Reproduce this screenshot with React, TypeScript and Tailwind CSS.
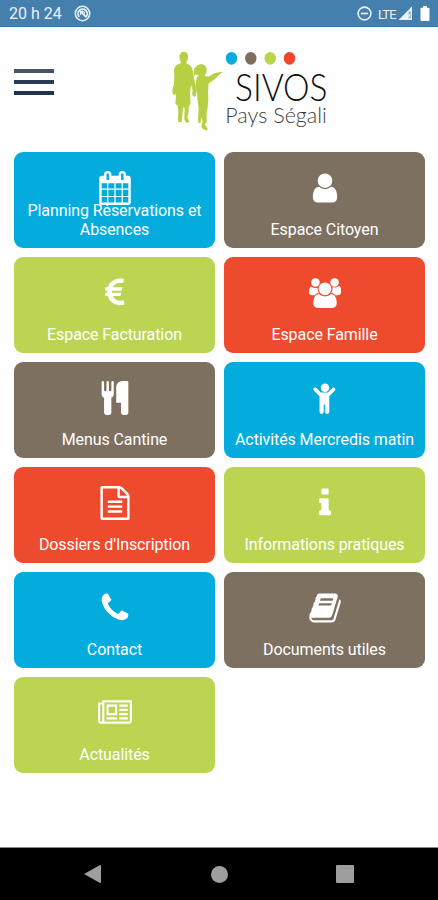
import React from "react";

type IconName =
  | "calendar" | "user" | "euro" | "users" | "cutlery" | "child"
  | "file" | "info" | "phone" | "book" | "news";

const ICONS: Record<IconName, { width: number; d: string }> = {
  calendar: { width: 1792, d: "M192 1664h288v-288h-288v288zm352 0h320v-288h-320v288zm-352-352h288v-320h-288v320zm352 0h320v-320h-320v320zm-352-384h288v-288h-288v288zm736 736h320v-288h-320v288zm-384-736h320v-288h-320v288zm768 736h288v-288h-288v288zm-384-352h320v-320h-320v320zm-352-864v-288q0-13-9.5-22.5t-22.5-9.5h-64q-13 0-22.5 9.5t-9.5 22.5v288q0 13 9.5 22.5t22.5 9.5h64q13 0 22.5-9.5t9.5-22.5zm736 864h288v-320h-288v320zm-384-384h320v-288h-320v288zm384 0h288v-288h-288v288zm32-480v-288q0-13-9.5-22.5t-22.5-9.5h-64q-13 0-22.5 9.5t-9.5 22.5v288q0 13 9.5 22.5t22.5 9.5h64q13 0 22.5-9.5t9.5-22.5zm384-64v1280q0 52-38 90t-90 38h-1408q-52 0-90-38t-38-90v-1280q0-52 38-90t90-38h128v-96q0-66 47-113t113-47h64q66 0 113 47t47 113v96h384v-96q0-66 47-113t113-47h64q66 0 113 47t47 113v96h128q52 0 90 38t38 90z" },
  user: { width: 1792, d: "M1536 1399q0 109-62.5 187t-150.5 78h-854q-88 0-150.5-78t-62.5-187q0-85 8.5-160.5t31.5-152 58.5-131 94-89 134.5-34.5q131 128 313 128t313-128q76 0 134.5 34.5t94 89 58.5 131 31.5 152 8.5 160.5zm-256-887q0 159-112.5 271.5t-271.5 112.5-271.5-112.5-112.5-271.5 112.5-271.5 271.5-112.5 271.5 112.5 112.5 271.5z" },
  euro: { width: 1792, d: "M1360 1307l35 159q3 12-3 22.5t-17 14.5l-5 1q-4 2-10.5 3.5t-16 4.5-21.5 5.5-25.5 5-30 5-33.5 4.5-36.5 3-38.5 1q-234 0-409-130.5t-238-351.5h-95q-13 0-22.5-9.5t-9.5-22.5v-113q0-13 9.5-22.5t22.5-9.5h66q-2-57 1-105h-67q-14 0-23-9t-9-23v-114q0-14 9-23t23-9h98q67-210 243.5-338t400.5-128q102 0 194 23 11 3 20 15 6 11 3 24l-43 159q-3 13-14 19.5t-24 2.5l-4-1q-4-1-11.5-2.5l-17.5-3.5-22.5-3.5-26-3-29-2.5-29.5-1q-126 0-226 64t-150 176h468q16 0 25 12 10 12 7 26l-24 114q-5 26-32 26h-488q-3 37 0 105h459q15 0 25 12 9 12 6 27l-24 112q-2 11-11 18.5t-20 7.5h-387q48 117 149.5 185.5t228.5 68.5q18 0 36-1.5t33.5-3.5 29.5-4.5 24.5-5 18.5-4.5l12-3 5-2q13-5 26 2 12 7 15 21z" },
  users: { width: 2048, d: "M657 896q-162 5-265 128h-134q-82 0-138-40.5t-56-118.5q0-353 124-353 6 0 43.5 21t97.5 42.5 119 21.5q67 0 133-23-5 37-5 66 0 159 90 288zm1071 637q0 120-73 189.5t-194 69.5h-874q-121 0-194-69.5t-73-189.5q0-53 3.5-103.5t14-109 26.5-108.5 43-97.5 62-81 85.5-53.5 111.5-20q10 0 43 21.5t73 48 107 48 135 21.5 135-21.5 107-48 73-48 43-21.5q61 0 111.5 20t85.5 53.5 62 81 43 97.5 26.5 108.5 14 109 3.5 103.5zm-1024-1277q0 106-75 181t-181 75-181-75-75-181 75-181 181-75 181 75 75 181zm704 384q0 159-112.5 271.5t-271.5 112.5-271.5-112.5-112.5-271.5 112.5-271.5 271.5-112.5 271.5 112.5 112.5 271.5zm576 225q0 78-56 118.5t-138 40.5h-134q-103-123-265-128 90-129 90-288 0-29-5-66 66 23 133 23 59 0 119-21.5t97.5-42.5 43.5-21q124 0 124 353zm-128-609q0 106-75 181t-181 75-181-75-75-181 75-181 181-75 181 75 75 181z" },
  cutlery: { width: 1792, d: "M832 64v640q0 61-35.5 111t-92.5 70v779q0 52-38 90t-90 38h-128q-52 0-90-38t-38-90v-779q-57-20-92.5-70t-35.5-111v-640q0-26 19-45t45-19 45 19 19 45v416q0 26 19 45t45 19 45-19 19-45v-416q0-26 19-45t45-19 45 19 19 45v416q0 26 19 45t45 19 45-19 19-45v-416q0-26 19-45t45-19 45 19 19 45zm768 0v1600q0 52-38 90t-90 38h-128q-52 0-90-38t-38-90v-512h-224q-13 0-22.5-9.5t-9.5-22.5v-800q0-132 94-226t226-94h256q26 0 45 19t19 45z" },
  child: { width: 1792, d: "M1412 508l-292 292v824q0 46-33 79t-79 33-79-33-33-79v-384h-64v384q0 46-33 79t-79 33-79-33-33-79v-824l-292-292q-28-28-28-68t28-68q29-28 68.5-28t67.5 28l228 228h368l228-228q28-28 68-28t68 28q28 29 28 68.5t-28 67.5zM1120 352a224 224 0 1 1-448 0a224 224 0 1 1 448 0z" },
  file: { width: 1792, d: "M1596 380q28 28 48 76t20 88v1152q0 40-28 68t-68 28h-1344q-40 0-68-28t-28-68v-1600q0-40 28-68t68-28h896q40 0 88 20t76 48zm-444-244v376h376q-10-29-22-41l-313-313q-12-12-41-22zm384 1528v-1024h-416q-40 0-68-28t-28-68v-416h-768v1536h1280zm-1024-864q0-14 9-23t23-9h704q14 0 23 9t9 23v64q0 14-9 23t-23 9h-704q-14 0-23-9t-9-23v-64zm736 224q14 0 23 9t9 23v64q0 14-9 23t-23 9h-704q-14 0-23-9t-9-23v-64q0-14 9-23t23-9h704zm0 256q14 0 23 9t9 23v64q0 14-9 23t-23 9h-704q-14 0-23-9t-9-23v-64q0-14 9-23t23-9h704z" },
  info: { width: 1792, d: "M1216 1344v128q0 26-19 45t-45 19h-512q-26 0-45-19t-19-45v-128q0-26 19-45t45-19h64v-384h-64q-26 0-45-19t-19-45v-128q0-26 19-45t45-19h384q26 0 45 19t19 45v576h64q26 0 45 19t19 45zm-128-1152v192q0 26-19 45t-45 19h-256q-26 0-45-19t-19-45v-192q0-26 19-45t45-19h256q26 0 45 19t19 45z" },
  phone: { width: 1792, d: "M1600 1240q0 27-10 70.5t-21 68.5q-21 50-122 106-94 51-186 51-27 0-52.5-3.5t-57.5-12.5-47.5-14.5-55.5-20.5-49-18q-98-35-175-83-128-79-264.5-215.5t-215.5-264.5q-48-77-83-175-3-9-18-49t-20.5-55.5-14.5-47.5-12.5-57.5-3.5-52.5q0-92 51-186 56-101 106-122 25-11 68.5-21t70.5-10q14 0 21 3 18 6 53 76 11 19 30 54t35 63.5 31 53.5q3 4 17.5 25t21.5 35.5 7 28.5q0 20-28.5 50t-62 55-62 53-28.5 46q0 9 5 22.5t8.5 20.5 14 24 11.5 19q76 137 174 235t235 174q2 1 19 11.5t24 14 20.5 8.5 22.5 5q18 0 46-28.5t53-62 55-62 50-28.5q14 0 28.5 7t35.5 21.5 25 17.5q25 15 53.5 31t63.5 35 54 30q70 35 76 53 3 7 3 21z" },
  book: { width: 1792, d: "M1703 478q40 57 18 129l-275 906q-19 64-76.5 107.5t-122.5 43.5h-923q-77 0-148.5-53.5t-99.5-131.5q-24-67-2-127 0-4 3-27t4-37q1-8-3-21.5t-3-19.5q2-11 8-21t16.5-23.5 16.5-23.5q23-38 45-91.5t30-91.5q3-10 .5-30t-.5-28q3-11 17-28t17-23q21-36 42-92t25-90q1-9-2.5-32t.5-28q4-13 22-30.5t22-22.5q19-26 42.5-84.5t27.5-96.5q1-8-3-25.5t-2-26.5q2-8 9-18t18-23 17-21q8-12 16.5-30.5t15-35 16-36 19.5-32 26.5-23.5 36-11.5 47.5 5.5l-1 3q38-9 51-9h761q74 0 114 56t18 130l-274 906q-36 119-71.5 153.5t-128.5 34.5h-869q-27 0-38 15-11 16-1 43 24 70 144 70h923q29 0 56-15.5t35-41.5l300-987q7-22 5-57 38 15 59 43zm-1064 2q-4 13 2 22.5t20 9.5h608q13 0 25.5-9.5t16.5-22.5l21-64q4-13-2-22.5t-20-9.5h-608q-13 0-25.5 9.5t-16.5 22.5zm-83 256q-4 13 2 22.5t20 9.5h608q13 0 25.5-9.5t16.5-22.5l21-64q4-13-2-22.5t-20-9.5h-608q-13 0-25.5 9.5t-16.5 22.5z" },
  news: { width: 2048, d: "M1024 512h-384v384h384v-384zm128 640v128h-640v-128h640zm0-768v640h-640v-640h640zm640 768v128h-512v-128h512zm0-256v128h-512v-128h512zm0-256v128h-512v-128h512zm0-256v128h-512v-128h512zm-1536 960v-960h-128v960q0 26 19 45t45 19 45-19 19-45zm1664 0v-1088h-1536v1088q0 33-11 64h1483q26 0 45-19t19-45zm128-1216v1216q0 80-56 136t-136 56h-1664q-80 0-136-56t-56-136v-1088h256v-128h1792z" },
};

const BLUE = "bg-[#03acdd]";
const BROWN = "bg-[#7e7060]";
const GREEN = "bg-[#bbd553]";
const RED = "bg-[#ee4b2e]";

const TILES: { icon: IconName; label: string; color: string }[] = [
  { icon: "calendar", label: "Planning Réservations et Absences", color: BLUE },
  { icon: "user", label: "Espace Citoyen", color: BROWN },
  { icon: "euro", label: "Espace Facturation", color: GREEN },
  { icon: "users", label: "Espace Famille", color: RED },
  { icon: "cutlery", label: "Menus Cantine", color: BROWN },
  { icon: "child", label: "Activités Mercredis matin", color: BLUE },
  { icon: "file", label: "Dossiers d'Inscription", color: RED },
  { icon: "info", label: "Informations pratiques", color: GREEN },
  { icon: "phone", label: "Contact", color: BLUE },
  { icon: "book", label: "Documents utiles", color: BROWN },
  { icon: "news", label: "Actualités", color: GREEN },
];

function StatusBar() {
  return (
    <div className="flex h-[27px] items-center border-b border-[#3173a8] bg-[#457fae] pl-[9px] pr-[8px] text-white">
      <span className="pt-[2px] text-[16px] leading-none text-[#eaf3fa]">20 h 24</span>
      <svg className="ml-[12px] mt-[1px] size-[17px]" viewBox="0 0 17 17" fill="none" stroke="#eaf3fa">
        <circle cx="8.5" cy="8.5" r="7.2" strokeWidth="1.5" />
        <path d="M12.4 11.2A4.6 4.6 0 1 0 5.3 11.8M5.2 5.2l7.2 7.2" strokeWidth="1.7" />
        <path d="M7.2 9.8A2 2 0 1 1 10.3 9" strokeWidth="1.3" />
      </svg>
      <svg className="ml-auto size-[15px]" viewBox="0 0 15 15" fill="none" stroke="#eaf3fa" strokeWidth="1.6">
        <circle cx="7.5" cy="7.5" r="6.4" />
        <path d="M4 7.5h7" />
      </svg>
      <span className="ml-[6px] mt-[2px] w-[19px] text-[13px] leading-none tracking-[-0.9px] text-[#eaf3fa]">LTE</span>
      <svg className="ml-[1px] mt-[1px] h-[15px] w-[15px]" viewBox="0 0 15 15">
        <path d="M14 .5V14H.5z" fill="#eaf3fa" />
        <path d="M10.7 5.5H14V14h-3.3z" fill="#457fae" opacity=".65" />
        <path d="M13.3 1v12.4H10" fill="none" stroke="#eaf3fa" strokeWidth="1.2" />
        <path d="M11.5 8v3M11.5 12v1" stroke="#eaf3fa" strokeWidth="1.2" />
      </svg>
      <svg className="ml-[7px] mt-[1px] h-[15px] w-[10px]" viewBox="0 0 10 15" fill="#fff">
        <path d="M3 0h4v1.8h1.6q.9 0 .9.9v11.4q0 .9-.9.9H1.4q-.9 0-.9-.9V2.7q0-.9.9-.9H3z" />
      </svg>
    </div>
  );
}

function Logo() {
  return (
    <svg className="h-[90px] w-[180px]" viewBox="0 0 180 90" aria-label="SIVOS Pays Ségali">
      {/* two children walking hand in hand */}
      <g transform="scale(.33333) translate(-15 -15)" fill="#b7d043">
        <path d="M71 35C80 35 85 42 84 51C84 58 81 63 79 66L80 71C91 75 96 79 98 91L102 115L107 138L109 158L105 171L98 166L98 151L93 135L90 160L92 190L86 200L86 217L82 232L88 245L79 249L73 239L74 204L70 202L67 224L65 241L66 246L56 247L54 239L55 216L53 197L46 192L48 169L46 159L45 166L38 163L37 149L42 134L43 107L42 88C44 79 50 74 62 70L63 65C58 59 58 52 59 46C61 39 65 35 71 35Z" />
        <path d="M122 73C132 71 140 79 140 89C140 98 137 104 133 107L145 110L163 100L180 96L188 97L178 104L164 118L146 130L144 157L145 176L143 202L140 219L140 248L134 252L143 267L140 272L128 266L124 260L128 244L124 232L121 250L115 249L114 236L116 205L112 177L111 150L105 171L97 165L98 151L105 153L108 128C108 116 111 110 116 108L113 105L106 103L103 109C100 101 101 83 108 80C111 76 116 73 122 73Z" />
      </g>
      <ellipse cx="66.5" cy="13.3" rx="5.7" ry="6.4" fill="#09abdc" />
      <ellipse cx="85.8" cy="13.3" rx="5.7" ry="6.4" fill="#7c6d5d" />
      <ellipse cx="105.2" cy="13.3" rx="5.7" ry="6.4" fill="#b9d64a" />
      <ellipse cx="124.5" cy="13.3" rx="5.7" ry="6.4" fill="#ee452b" />
      <text x="70" y="56.3" textLength="92.5" lengthAdjust="spacingAndGlyphs" className="font-['Lato',sans-serif] text-[36.5px] font-light" fill="#111">SIVOS</text>
      <text x="60.3" y="77.7" textLength="101.5" lengthAdjust="spacingAndGlyphs" className="font-['Lato',sans-serif] text-[21px] font-light" fill="#3d3d3d">Pays Ségali</text>
    </svg>
  );
}

function Tile({ icon, label, color }: { icon: IconName; label: string; color: string }) {
  const { width, d } = ICONS[icon];
  return (
    <button className={`flex min-h-0 flex-col items-center rounded-[9px] px-[6px] pb-[8px] pt-[19px] ${color}`}>
      <span className="flex h-[34px] min-h-0 shrink justify-center">
        <svg className="size-[34px] shrink-0" viewBox={`0 0 ${width} 1792`} fill="#fff">
          <path d={d} />
        </svg>
      </span>
      <span className="mt-auto max-w-[181px] shrink-0 text-center text-[16px] leading-[18.7px] tracking-[-0.09px] text-white">{label}</span>
    </button>
  );
}

export default function App() {
  return (
    <div className="flex h-[900px] w-[438px] flex-col overflow-hidden bg-[#fefefe] font-['Roboto',sans-serif]">
      <StatusBar />
      <header className="flex h-[125px] shrink-0 items-start pl-[14px]">
        <button className="mt-[42px] flex w-[40px] flex-col gap-[7px]" aria-label="Menu">
          <span className="h-[4px] w-full bg-[#475569]" />
          <span className="h-[4px] w-full bg-[#283c57]" />
          <span className="h-[4px] w-full bg-[#20334f]" />
        </button>
        <div className="ml-[111px] mt-[18px]">
          <Logo />
        </div>
      </header>
      <main className="grid grow auto-rows-[95.5px] grid-cols-[201px_201px] content-start gap-x-[9px] gap-y-[9.5px] pl-[14px] pt-[0.4px]">
        {TILES.map((t) => (
          <Tile key={t.label} {...t} />
        ))}
      </main>
      <nav className="flex h-[53px] shrink-0 items-center border-t border-[#8a8a8a] bg-black pl-[84px]">
        <svg className="h-[18px] w-[17px]" viewBox="0 0 17 18" fill="#9e9e9e"><path d="M0 9L16 0Q17 0 17 1V17Q17 18 16 18z" /></svg>
        <span className="ml-[110px] size-[17px] rounded-full bg-[#9e9e9e]" />
        <span className="ml-[108px] size-[18px] rounded-[1px] bg-[#9e9e9e]" />
      </nav>
    </div>
  );
}
